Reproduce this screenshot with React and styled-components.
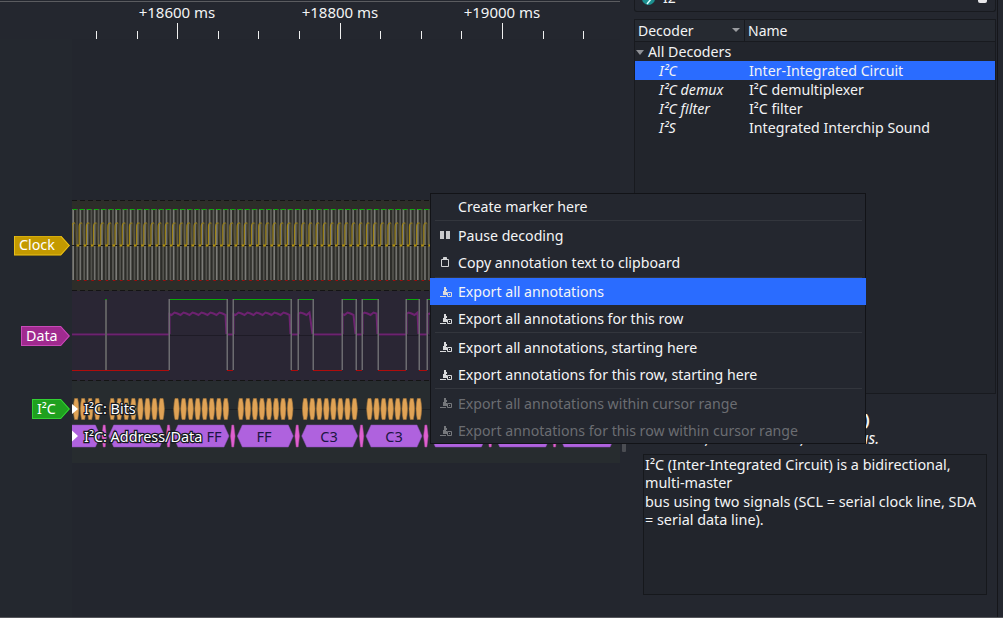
import React from 'react';
import styled, { createGlobalStyle } from 'styled-components';

const Global = createGlobalStyle`
  html, body { margin: 0; padding: 0; background: #24272f; overflow: hidden; }
  body { font-family: "Noto Sans", "Open Sans", sans-serif; font-size: 14px; color: #f3f4f5; }
`;

const Window = styled.div`
  position: relative;
  width: 1003px;
  height: 618px;
  display: grid;
  grid-template-columns: 620px 383px;
  overflow: hidden;
  border-bottom: 1px solid #55565b;
  box-sizing: border-box;
`;

// left: the trace view
const TraceView = styled.div`
  display: flex;
  flex-direction: column;
  min-width: 0;
`;

const TopRule = styled.div`
  width: 628px;
  height: 1px;
  margin-top: 1px;
  flex: none;
  background: #5b5c60;
`;

const Ruler = styled.div`
  height: 37px;
  flex: none;
`;

const RulerSvg = styled.svg`
  display: block;
  overflow: visible;
`;

const TraceBody = styled.div`
  flex: 1;
  display: grid;
  grid-template-columns: 72px 548px;
`;

const LabelColumn = styled.div`
  display: flex;
  flex-direction: column;
  align-items: flex-end;
  background: #24282f;
  padding-top: 161px;
`;

const LabelSlot = styled.div`
  height: ${p => p.$h}px;
  display: flex;
  align-items: ${p => (p.$top ? 'flex-start' : 'center')};
  padding-top: ${p => p.$top || 0}px;
  box-sizing: border-box;
`;

const Tag = styled.div`
  height: 20px;
  width: ${p => p.$w}px;
  padding-left: 5px;
  box-sizing: border-box;
  margin-right: 2px;
  display: flex;
  align-items: center;
  font-size: 14.3px;
  line-height: 1;
  color: #fff;
  background: ${p => p.$bg};
  clip-path: polygon(0 0, calc(100% - 9px) 0, 100% 50%, calc(100% - 9px) 100%, 0 100%);
  position: relative;
  &::after {
    content: '';
    position: absolute;
    inset: 0;
    background: ${p => p.$edge};
    clip-path: polygon(0 0, calc(100% - 9px) 0, 100% 50%, calc(100% - 9px) 100%, 0 100%, 0 0, 1px 1px, 1px calc(100% - 1px), calc(100% - 9.5px) calc(100% - 1px), calc(100% - 1.5px) 50%, calc(100% - 9.5px) 1px, 1px 1px);
  }
`;

const TraceArea = styled.div`
  display: flex;
  flex-direction: column;
  background: #23262e;
  padding-top: 161px;
`;

const RowSvg = styled.svg`
  display: block;
  flex: none;
`;

const Handle = styled.div`
  position: absolute;
  left: 622px;
  top: 430px;
  width: 4px;
  height: 22px;
  border-radius: 1px;
  background: #4b4d53;
`;

// right: decoder panel
const SidePanel = styled.div`
  background: #24272f;
  display: flex;
  flex-direction: column;
  margin-right: 5px;
  padding: 0 1px 0 14px;
  border-right: 1px solid #15161a;
  height: 617px;
  box-sizing: border-box;
`;

const SearchBar = styled.div`
  height: 12px;
  flex: none;
  display: flex;
  justify-content: space-between;
  box-sizing: border-box;
  border: 1px solid #181a1f;
  border-top: 0;
  border-radius: 0 0 3px 3px;
  margin-bottom: 7px;
  padding: 0 8px 0 7px;
  overflow: hidden;
`;

const SearchLeft = styled.div`
  display: flex;
  align-items: flex-end;
  height: 5px;
`;

const SearchText = styled.span`
  font-size: 14px;
  line-height: 14px;
  margin-left: 8px;
`;

const ClearIcon = styled.i`
  width: 9px;
  height: 3px;
  background: #e8e8ea;
  border-radius: 0 0 2px 2px;
`;

const Tree = styled.div`
  height: 375px;
  flex: none;
  border: 1px solid #181a1f;
  background: #22252c;
  box-sizing: border-box;
`;

const TreeHead = styled.div`
  height: 22px;
  box-sizing: border-box;
  display: grid;
  grid-template-columns: 110px 1fr;
  background: #262a31;
  border-bottom: 1px solid #181a1f;
`;

const HeadCell = styled.div`
  position: relative;
  padding-left: ${p => p.$pad}px;
  font-size: 14px;
  line-height: 21px;
  border-right: ${p => (p.$div ? '1px solid #181a1f' : 'none')};
`;

const SortCaret = styled.i`
  position: absolute;
  right: 4px;
  top: 8px;
  border-left: 4px solid transparent;
  border-right: 4px solid transparent;
  border-top: 4px solid #9a9ca0;
`;

const TreeRow = styled.div`
  height: 19px;
  display: grid;
  grid-template-columns: ${p => (p.$group ? '1fr' : '90px 1fr')};
  font-size: 14.2px;
  line-height: 19px;
  color: #f2f3f4;
  background: ${p => (p.$on ? '#2a6cff' : 'transparent')};
  padding-left: ${p => (p.$group ? 1 : 24)}px;
`;

const GroupCaret = styled.i`
  display: inline-block;
  margin: 0 4px 2px 0;
  border-left: 4px solid transparent;
  border-right: 4px solid transparent;
  border-top: 5px solid #8f9196;
`;

const Em = styled.span`
  font-style: italic;
`;

const Heading = styled.div`
  flex: none;
  height: 60px;
  box-sizing: border-box;
  padding: 16px 0 0 10px;
`;

const HeadingTitle = styled.div`
  font-size: 16px;
  font-weight: 700;
  line-height: 20px;
  white-space: nowrap;
`;

const Subtitle = styled.div`
  font-size: 15.6px;
  font-style: italic;
  line-height: 16px;
  white-space: nowrap;
`;

const Description = styled.div`
  flex: none;
  height: 141px;
  width: 344px;
  margin-left: 9px;
  box-sizing: border-box;
  border: 1px solid #16181c;
  background: #22252c;
  font-size: 14.4px;
  line-height: 18.4px;
  padding: 1px 0 0 1px;
  white-space: pre-wrap;
`;

// context menu, over everything
const Menu = styled.div`
  position: absolute;
  left: 430px;
  top: 193px;
  width: 436px;
  height: 251px;
  box-sizing: border-box;
  background: #24272f;
  border: 1px solid #121317;
`;

const MenuItem = styled.div`
  height: ${p => p.$h || 27}px;
  box-sizing: border-box;
  padding-bottom: ${p => (p.$lift ? 2 : 0)}px;
  display: flex;
  align-items: center;
  font-size: 14.15px;
  color: ${p => (p.$off ? '#6b6d72' : '#f4f5f6')};
  background: ${p => (p.$on ? '#2a6cff' : 'transparent')};
  box-shadow: ${p => (p.$on ? '-1px 0 #2a6cff, 1px 0 #2a6cff' : 'none')};
`;

const IconSlot = styled.span`
  width: 27px;
  flex: none;
  display: flex;
  padding-left: 9px;
  box-sizing: border-box;
`;

const Sep = styled.div`
  height: 1px;
  margin: 0 3px 0 4px;
  background: #33363d;
`;

const PauseIcon = () => (
  <svg width="10" height="8" viewBox="0 0 10 8"><path d="M0 0h4v8H0zM6 0h4v8H6z" fill="#c9cacc" /></svg>
);

const ClipIcon = () => (
  <svg width="10" height="10" viewBox="0 0 10 10" fill="none" stroke="#d4d5d7">
    <path d="M1.500 2.500h7v7h-7z" /><path d="M3.500 .5h3v2h-3z" fill="#d4d5d7" />
  </svg>
);

const ExportIcon = ({ off }) => {
  const c = off ? '#76787c' : '#d9dadc';
  return (
    <svg width="12" height="10" viewBox="0 0 12 10">
      <path d="M0 9h6v1H0zM4 0h2v2h1v2H6v1h1v3H3V4h1z" fill={c} />
      <path d="M7.500 5.500h4v4h-4z" fill="none" stroke={c} />
      <path d="M9 7h1v1H9z" fill={c} />
    </svg>
  );
};

const Logo = () => (
  <svg width="13" height="13" viewBox="0 0 13 13" style={{ flex: 'none' }}><circle cx="6.500" cy="6.500" r="6.500" fill="#1c8f8f" /><path d="M5 12l4-5" stroke="#dff" strokeWidth="1.500" /></svg>
);

// ruler
const MAJOR = [177, 340, 502];
const MAJOR_TEXT = ['+18600 ms', '+18800 ms', '+19000 ms'];
const TICKS = [96, 137, 177, 218, 258, 299, 340, 380, 421, 461, 502, 543, 583, 623];

const RulerDrawing = () => (
  <RulerSvg width="620" height="37" viewBox="0 2 620 37">
    {TICKS.map(x => {
      const major = MAJOR.includes(x);
      return <rect key={x} x={x} y={major ? 23 : 31} width="1" height={major ? 16 : 8} fill="#f0f0f0" />;
    })}
    {MAJOR.map((x, i) => (
      <text key={x} x={x} y="18" textAnchor="middle" fontSize="15" fontFamily="Noto Sans" fill="#f3f4f5">
        {MAJOR_TEXT[i]}
      </text>
    ))}
  </RulerSvg>
);

// clock row: x is local to the trace area, 0 = page x 72
const CLOCK_PERIOD = 7.18;
const clockEdges = Array.from({ length: 76 }, (_, i) => i * CLOCK_PERIOD);

const ClockRow = () => {
  const rise = clockEdges.map(x => `M${x} 45 L${x} 27 Q${x} 23 ${x + 2} 23 L${x + 3} 23`).join(' ');
  const fall = clockEdges.map(x => `M${x + 3} 23 L${x + 5} 45`).join(' ');
  return (
    <RowSvg width="548" height="91" viewBox="0 0 548 91">
      <rect width="548" height="91" fill="#2d2d29" />
      <path d="M0 .5H548M0 90.500H548" stroke="#141414" strokeDasharray="5 3" />
      {clockEdges.map((x, i) => (
        <g key={i}>
          <rect x={x + 0.300} y="9" width="1.700" height="71" fill={i % 2 ? '#72726e' : '#7c7c78'} />
          <rect x={x + 4.200} y="9" width="1.700" height="71" fill={i % 2 ? '#5c5c57' : '#52524d'} />
          <rect x={x + 0.800} y="9" width="4" height="1" fill="#08b208" />
          <rect x={x + 5} y="80" width="2.500" height="1" fill="#a10d0d" />
        </g>
      ))}
      <path d="M0 45.500H548" stroke="#1c1c1a" />
      <path d={fall} stroke="#a88a17" strokeOpacity=".2" strokeWidth="2" fill="none" />
      <path d={rise} stroke="#9c8216" strokeWidth="1.200" fill="none" />
      {clockEdges.map((x, i) => (
        <rect key={i} x={x - 2.700} y="44.500" width="2.700" height="2" fill="#b3920f" />
      ))}
    </RowSvg>
  );
};

// data row
const HIGHS = [[97, 155], [161, 219], [226, 241], [270, 284], [290, 306], [334, 347], [355, 372]];
const LOWS = [[0, 97], [155, 161], [219, 226], [241, 270], [284, 290], [306, 334], [347, 355]];

const wobble = (a, b) => {
  let d = `M${a} 43 L${a} 23`;
  for (let x = a + 2; x < b; x += 3) d += ` L${x} ${22.500 + (x % 9 < 3 ? 1.500 : x % 9 < 6 ? -1 : 0)}`;
  return `${d} L${b} 43`;
};

const DataRow = () => (
  <RowSvg width="548" height="90" viewBox="0 0 548 90">
    <rect width="548" height="90" fill="#2a2634" />
    <path d="M0 89.500H548" stroke="#141414" strokeDasharray="5 3" />
    <path d="M0 44.500H548" stroke="#1e1b26" />
    {LOWS.map(([a, b]) => (
      <g key={a}>
        <rect x={a} y="42.500" width={b - a} height="2" fill="#6d2270" />
        <rect x={a} y="79" width={b - a} height="1" fill="#b00c0c" />
      </g>
    ))}
    <rect x="33" y="8" width="2" height="71" fill="#5e5e60" />
    <rect x="33" y="8" width="2" height="1" fill="#128a12" />
    {HIGHS.map(([a, b]) => (
      <g key={a}>
        <rect x={a} y="8" width={b - a} height="1" fill="#09a809" />
        <path d={wobble(a + 0.500, b - 0.500)} stroke="#6d2270" strokeWidth="2" fill="none" />
        <rect x={a - 0.500} y="8" width="1.500" height="71" fill="#6c6c70" />
        <rect x={b - 0.500} y="8" width="1.500" height="71" fill="#6c6c70" />
      </g>
    ))}
  </RowSvg>
);

// i2c rows
const GROUPS = [-27.600, 36.700, 101, 165.300, 229.700, 294, 358.400, 422.700, 487.100];
const BIT_OFFSETS = [0, 1, 2, 3, 4, 5, 6, 7].map(i => i * 7.050);
const BIT_Y = 28;
const WORD_Y = 55;
const WORD_W = 56;
const WORD_TEXT = [[142, 'FF'], [192, 'FF'], [257, 'C3'], [322, 'C3']];

const bitPath = x => `M${x + 0.700} ${BIT_Y} L${x + 1.200} ${BIT_Y - 6} L${x + 2} ${BIT_Y - 10.500} H${x + 5} L${x + 5.800} ${BIT_Y - 6} L${x + 6.300} ${BIT_Y} L${x + 5.800} ${BIT_Y + 6} L${x + 5} ${BIT_Y + 10.500} H${x + 2} L${x + 1.200} ${BIT_Y + 6} Z`;

const I2cRows = () => (
  <RowSvg width="548" height="82" viewBox="0 0 548 82">
    <rect width="548" height="82" fill="#272c2f" />
    <path d={`M0 ${BIT_Y + 0.500}H548`} stroke="#1c2024" />
    {GROUPS.map(g => BIT_OFFSETS.map(b => (
      <path key={`${g}-${b}`} d={bitPath(g + b)} fill="#e0a356" stroke="#a9793a" strokeWidth=".6" />
    )))}
    {GROUPS.map(g => (
      <path
        key={g}
        d={`M${g - 6.800} ${WORD_Y} L${g - 5.500} ${WORD_Y - 11} H${g - 3.500} L${g - 2.200} ${WORD_Y} L${g - 3.500} ${WORD_Y + 11} H${g - 5.500} Z`}
        fill="#e060d0"
        stroke="#a8459e"
        strokeWidth=".5"
      />
    ))}
    {GROUPS.map(g => (
      <path
        key={g}
        d={`M${g} ${WORD_Y} L${g + 5} ${WORD_Y - 11} H${g + WORD_W - 5} L${g + WORD_W} ${WORD_Y} L${g + WORD_W - 5} ${WORD_Y + 11} H${g + 5} Z`}
        fill="#af62de"
        stroke="#8f4fb8"
        strokeWidth=".5"
      />
    ))}
    {WORD_TEXT.map(([x, t]) => (
      <text key={x} x={x} y={WORD_Y + 5.500} textAnchor="middle" fontSize="14.500" fontFamily="Noto Sans" fill="#1c1544">
        {t}
      </text>
    ))}
    <path d={`M0 ${BIT_Y - 5}L6 ${BIT_Y}L0 ${BIT_Y + 5}Z M0 ${WORD_Y - 5.500}L6 ${WORD_Y}L0 ${WORD_Y + 5.500}Z`} fill="#fff" />
    <g fontFamily="Noto Sans" fontSize="14.400" fill="#fff" stroke="#141820" strokeWidth="2.500" paintOrder="stroke">
      <text x="12" y={BIT_Y + 5}>I²C: Bits</text>
      <text x="12" y={WORD_Y + 6}>I²C: Address/Data</text>
    </g>
  </RowSvg>
);

export default function App() {
  return (
    <Window>
      <Global />
      <TraceView>
        <TopRule />
        <Ruler><RulerDrawing /></Ruler>
        <TraceBody>
          <LabelColumn>
            <LabelSlot $h={91}>
              <Tag $w={56} $bg="#c49a00" $edge="#e8bf1a"><span>Clock</span></Tag>
            </LabelSlot>
            <LabelSlot $h={90}>
              <Tag $w={49} $bg="#a02a8f" $edge="#c84ab8"><span>Data</span></Tag>
            </LabelSlot>
            <LabelSlot $h={82} $top={18}>
              <Tag $w={38} $bg="#1fa01f" $edge="#33d033"><span>I²C</span></Tag>
            </LabelSlot>
          </LabelColumn>
          <TraceArea>
            <ClockRow />
            <DataRow />
            <I2cRows />
          </TraceArea>
        </TraceBody>
      </TraceView>

      <SidePanel>
        <SearchBar>
          <SearchLeft><Logo /><SearchText>I2</SearchText></SearchLeft>
          <ClearIcon />
        </SearchBar>
        <Tree>
          <TreeHead>
            <HeadCell $pad={3} $div>Decoder<SortCaret /></HeadCell>
            <HeadCell $pad={3}>Name</HeadCell>
          </TreeHead>
          <TreeRow $group><span><GroupCaret />All Decoders</span></TreeRow>
          <TreeRow $on><Em>I²C</Em><span>Inter-Integrated Circuit</span></TreeRow>
          <TreeRow><Em>I²C demux</Em><span>I²C demultiplexer</span></TreeRow>
          <TreeRow><Em>I²C filter</Em><span>I²C filter</span></TreeRow>
          <TreeRow><Em>I²S</Em><span>Integrated Interchip Sound</span></TreeRow>
        </Tree>
        <Heading>
          <HeadingTitle>I²C (Inter-Integrated Circuit)</HeadingTitle>
          <Subtitle>Two-wire, multi-master, serial bus.</Subtitle>
        </Heading>
        <Description>
          I²C (Inter-Integrated Circuit) is a bidirectional, multi-master{'\n'}bus using two signals (SCL = serial clock line, SDA = serial data line).
        </Description>
      </SidePanel>

      <Handle />

      <Menu>
        <MenuItem $h={26} $lift><IconSlot />Create marker here</MenuItem>
        <Sep />
        <MenuItem $h={28}><IconSlot><PauseIcon /></IconSlot>Pause decoding</MenuItem>
        <MenuItem $h={28} $lift><IconSlot><ClipIcon /></IconSlot>Copy annotation text to clipboard</MenuItem>
        <Sep />
        <MenuItem $on><IconSlot><ExportIcon /></IconSlot>Export all annotations</MenuItem>
        <MenuItem><IconSlot><ExportIcon /></IconSlot>Export all annotations for this row</MenuItem>
        <Sep />
        <MenuItem $h={28}><IconSlot><ExportIcon /></IconSlot>Export all annotations, starting here</MenuItem>
        <MenuItem><IconSlot><ExportIcon /></IconSlot>Export annotations for this row, starting here</MenuItem>
        <Sep />
        <MenuItem $h={28} $off><IconSlot><ExportIcon off /></IconSlot>Export all annotations within cursor range</MenuItem>
        <MenuItem $off><IconSlot><ExportIcon off /></IconSlot>Export annotations for this row within cursor range</MenuItem>
      </Menu>
    </Window>
  );
}
